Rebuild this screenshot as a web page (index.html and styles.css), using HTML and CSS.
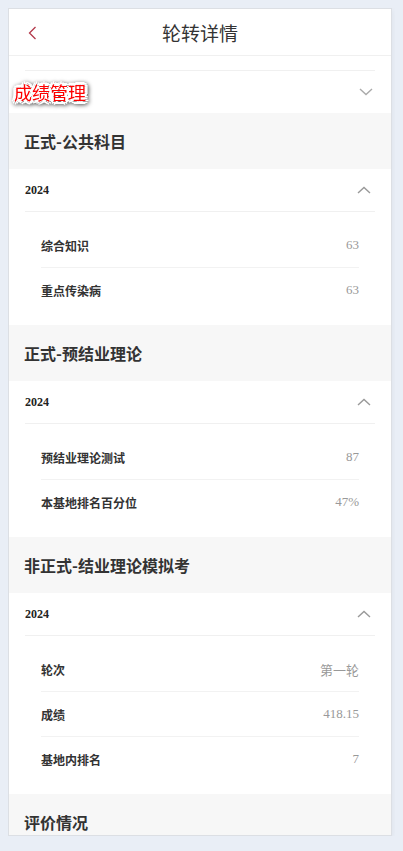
FILE: index.html
```html
<!DOCTYPE html>
<html lang="zh-CN">
<head>
    <meta charset="UTF-8">
    <meta name="viewport" content="width=device-width, initial-scale=1.0">
    <title>轮转详情</title>
    <link rel="stylesheet" href="styles.css">
</head>
<body>
    <div class="page">
        <!-- 顶部导航 -->
        <div class="header">
            <span class="back">
                <svg width="9" height="14" viewBox="0 0 9 14"><path d="M7.5 1 L1.5 7 L7.5 13" fill="none" stroke="#b3394a" stroke-width="1.3"/></svg>
            </span>
            <h1>轮转详情</h1>
        </div>

        <!-- 成绩管理 -->
        <div class="module">
            <span class="module-name">成绩管理</span>
            <svg class="arrow" width="14" height="8" viewBox="0 0 14 8"><path d="M1 1 L7 6.5 L13 1" fill="none" stroke="#aaa" stroke-width="1.4"/></svg>
        </div>

        <div class="group">
            <div class="group-title">正式-公共科目</div>
            <div class="year-row">
                <span class="year">2024</span>
                <svg class="arrow" width="14" height="8" viewBox="0 0 14 8"><path d="M1 7 L7 1.5 L13 7" fill="none" stroke="#999" stroke-width="1.4"/></svg>
            </div>
            <div class="items">
                <div class="item"><span class="label">综合知识</span><span class="value">63</span></div>
                <div class="item"><span class="label">重点传染病</span><span class="value">63</span></div>
            </div>
        </div>

        <div class="group">
            <div class="group-title">正式-预结业理论</div>
            <div class="year-row">
                <span class="year">2024</span>
                <svg class="arrow" width="14" height="8" viewBox="0 0 14 8"><path d="M1 7 L7 1.5 L13 7" fill="none" stroke="#999" stroke-width="1.4"/></svg>
            </div>
            <div class="items">
                <div class="item"><span class="label">预结业理论测试</span><span class="value">87</span></div>
                <div class="item"><span class="label">本基地排名百分位</span><span class="value">47%</span></div>
            </div>
        </div>

        <div class="group">
            <div class="group-title">非正式-结业理论模拟考</div>
            <div class="year-row">
                <span class="year">2024</span>
                <svg class="arrow" width="14" height="8" viewBox="0 0 14 8"><path d="M1 7 L7 1.5 L13 7" fill="none" stroke="#999" stroke-width="1.4"/></svg>
            </div>
            <div class="items">
                <div class="item"><span class="label">轮次</span><span class="value">第一轮</span></div>
                <div class="item"><span class="label">成绩</span><span class="value">418.15</span></div>
                <div class="item"><span class="label">基地内排名</span><span class="value">7</span></div>
            </div>
        </div>

        <div class="group">
            <div class="group-title">评价情况</div>
        </div>
    </div>
</body>
</html>
```

FILE: styles.css
```css
body {
    font-family: "Liberation Serif", "Noto Sans CJK SC", serif;
    background-color: #e9eef6;
    margin: 8px;
    color: #333;
}
.page {
    width: 382px;
    height: 826px;
    overflow: hidden;
    background: #ffffff;
    border: 1px solid #dcdfe4;
    box-shadow: 0 2px 6px rgba(0, 0, 0, 0.06);
}
.header {
    height: 46px;
    border-bottom: 1px solid #f0f0f0;
    display: flex;
    align-items: center;
    justify-content: center;
    position: relative;
}
.header h1 {
    margin: 0;
    font-family: "Noto Sans CJK SC", sans-serif;
    font-size: 19px;
    font-weight: 400;
    color: #333;
}
.back {
    position: absolute;
    left: 19px;
    top: 17px;
    display: flex;
}
.module {
    margin: 14px 16px 0;
    height: 42px;
    border-top: 1px solid #f0f0f0;
    display: flex;
    align-items: center;
    justify-content: space-between;
    padding-right: 2px;
}
.module-name {
    margin-left: -11px;
    font-family: "Noto Sans CJK SC", sans-serif;
    font-size: 18px;
    color: #f00;
    text-shadow: 3px 0 0 #fff, -3px 0 0 #fff, 0 3px 0 #fff, 0 -3px 0 #fff,
        2px 2px 0 #fff, -2px -2px 0 #fff, 2px -2px 0 #fff, -2px 2px 0 #fff;
    filter: drop-shadow(1px 1px 2px rgba(0, 0, 0, 0.7));
}
.group-title {
    height: 56px;
    display: flex;
    align-items: center;
    padding: 0 15px;
    background-color: #f7f7f7;
    font-family: "Noto Sans CJK SC", sans-serif;
    font-size: 16px;
    font-weight: 700;
    color: #333;
}
.year-row {
    margin: 0 16px;
    height: 42px;
    border-bottom: 1px solid #f0f0f0;
    display: flex;
    align-items: center;
    justify-content: space-between;
    padding-right: 4px;
}
.year {
    font-size: 12px;
    font-weight: 700;
    color: #222;
}
.items {
    padding: 11px 32px 13px;
}
.item {
    height: 44px;
    display: flex;
    align-items: center;
    justify-content: space-between;
    border-bottom: 1px solid #f2f2f2;
}
.item:last-child {
    border-bottom: none;
}
.label {
    font-family: "Noto Sans CJK SC", sans-serif;
    font-size: 12px;
    font-weight: 700;
    color: #333;
}
.value {
    font-size: 13px;
    color: #999;
}
```
